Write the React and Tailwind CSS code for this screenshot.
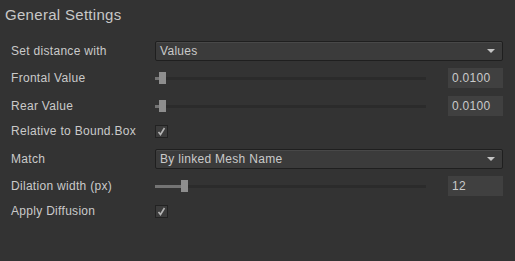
import React from 'react';

function Dropdown({ value }) {
    return (
        <div className="flex-1 h-[20px] flex items-center justify-between pl-[4px] pr-[7px] rounded-[2px] border border-[#1f1f1f] bg-[#3b3b3b] shadow-[inset_0_1px_0_rgba(255,255,255,0.07)]">
            <span>{value}</span>
            <span className="w-0 h-0 border-l-[4px] border-r-[4px] border-t-[4px] border-l-transparent border-r-transparent border-t-[#c4c4c4]"></span>
        </div>
    );
}

function Slider({ pos, value }) {
    return (
        <div className="flex-1 flex items-center">
            <div className="w-[271px] h-[12px] flex items-center">
                <div className="h-[3px] bg-[#747474]" style={{ width: pos }}></div>
                <div className="w-[7px] h-[12px] bg-[#8e8e8e] shrink-0"></div>
                <div className="flex-1 h-[3px] bg-[#2b2b2b]"></div>
            </div>
            <div className="ml-auto w-[55px] h-[20px] bg-[#404040] flex items-center px-[4px]">{value}</div>
        </div>
    );
}

function Check() {
    return (
        <div className="w-[13px] h-[13px] border border-[#222222] bg-[#3c3c3c] flex items-center justify-center">
            <svg width="9" height="9" viewBox="0 0 9 9">
                <path d="M1.5 5 L3.5 7.5 L7.5 1" fill="none" stroke="#b4b4b4" strokeWidth="1.6" />
            </svg>
        </div>
    );
}

function Row({ label, mt, children }) {
    return (
        <div className={`flex items-center h-[20px] ${mt}`}>
            <div className="w-[144px] shrink-0">{label}</div>
            {children}
        </div>
    );
}

export default function App() {
    return (
        <div className="w-[515px] h-[261px] bg-[#333333] text-[#cacaca] text-[12px] tracking-[0.3px] leading-[20px] font-['Liberation_Sans',Arial,sans-serif]">
            <div className="pt-[5px] pl-[5px] text-[15px] tracking-[0.3px] leading-[20px] text-[#c8c8c8]">General Settings</div>
            <div className="pl-[11px] pr-[12px] flex flex-col">
                <Row label="Set distance with" mt="mt-[16px]">
                    <Dropdown value="Values" />
                </Row>
                <Row label="Frontal Value" mt="mt-[7px]">
                    <Slider pos={4} value="0.0100" />
                </Row>
                <Row label="Rear Value" mt="mt-[8px]">
                    <Slider pos={4} value="0.0100" />
                </Row>
                <Row label="Relative to Bound.Box" mt="mt-[5px]">
                    <Check />
                </Row>
                <Row label="Match" mt="mt-[8px]">
                    <Dropdown value="By linked Mesh Name" />
                </Row>
                <Row label="Dilation width (px)" mt="mt-[7px]">
                    <Slider pos={26} value="12" />
                </Row>
                <Row label="Apply Diffusion" mt="mt-[5px]">
                    <Check />
                </Row>
            </div>
        </div>
    );
}
